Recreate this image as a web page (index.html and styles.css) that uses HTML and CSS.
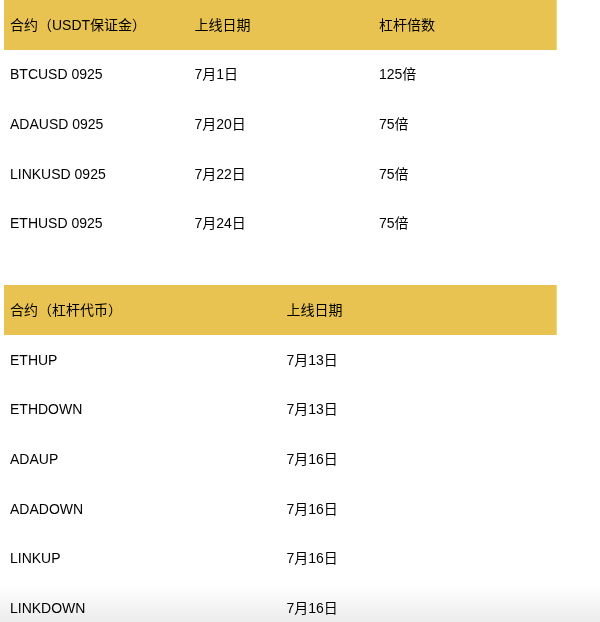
FILE: index.html
```html
<!DOCTYPE html>
<html lang="zh">
<head>
<meta charset="utf-8">
<link rel="stylesheet" href="styles.css">
</head>
<body>
<div class="fade"></div>
<div class="page">
  <div class="table cols3">
    <div class="row head"><div class="cell">合约（USDT保证金）</div><div class="cell">上线日期</div><div class="cell">杠杆倍数</div></div>
    <div class="row"><div class="cell">BTCUSD 0925</div><div class="cell">7月1日</div><div class="cell">125倍</div></div>
    <div class="row"><div class="cell">ADAUSD 0925</div><div class="cell">7月20日</div><div class="cell">75倍</div></div>
    <div class="row"><div class="cell">LINKUSD 0925</div><div class="cell">7月22日</div><div class="cell">75倍</div></div>
    <div class="row"><div class="cell">ETHUSD 0925</div><div class="cell">7月24日</div><div class="cell">75倍</div></div>
  </div>
  <div class="table cols2">
    <div class="row head"><div class="cell">合约（杠杆代币）</div><div class="cell">上线日期</div></div>
    <div class="row"><div class="cell">ETHUP</div><div class="cell">7月13日</div></div>
    <div class="row"><div class="cell">ETHDOWN</div><div class="cell">7月13日</div></div>
    <div class="row"><div class="cell">ADAUP</div><div class="cell">7月16日</div></div>
    <div class="row"><div class="cell">ADADOWN</div><div class="cell">7月16日</div></div>
    <div class="row"><div class="cell">LINKUP</div><div class="cell">7月16日</div></div>
    <div class="row"><div class="cell">LINKDOWN</div><div class="cell">7月16日</div></div>
  </div>
</div>
</body>
</html>
```
FILE: styles.css
```css
html, body {
  margin: 0;
  padding: 0;
  background: #ffffff;
  overflow: hidden;
}
body {
  font-family: "Liberation Sans", "Noto Sans CJK SC", sans-serif;
  font-size: 14px;
  color: #000000;
}
.page {
  position: relative;
  width: 553px;
  padding: 0 0 0 4px;
  display: flex;
  flex-direction: column;
  gap: 37.5px;
}
.table {
  display: flex;
  flex-direction: column;
}
.row {
  display: grid;
  height: 49.6px;
  align-items: center;
}
.cols3 .row {
  grid-template-columns: 184.5px 184.5px 1fr;
}
.cols2 .row {
  grid-template-columns: 276.5px 1fr;
}
.cell {
  padding-left: 6px;
  line-height: 20px;
  white-space: nowrap;
}
.head {
  background: #e9c352;
  box-shadow: inset -1px 0 0 #f0d57c;
}
.fade {
  position: fixed;
  left: 0;
  right: 0;
  bottom: 0;
  height: 36px;
  background: linear-gradient(to bottom, rgba(238,238,238,0), rgba(236,236,236,1));
  pointer-events: none;
}
```
